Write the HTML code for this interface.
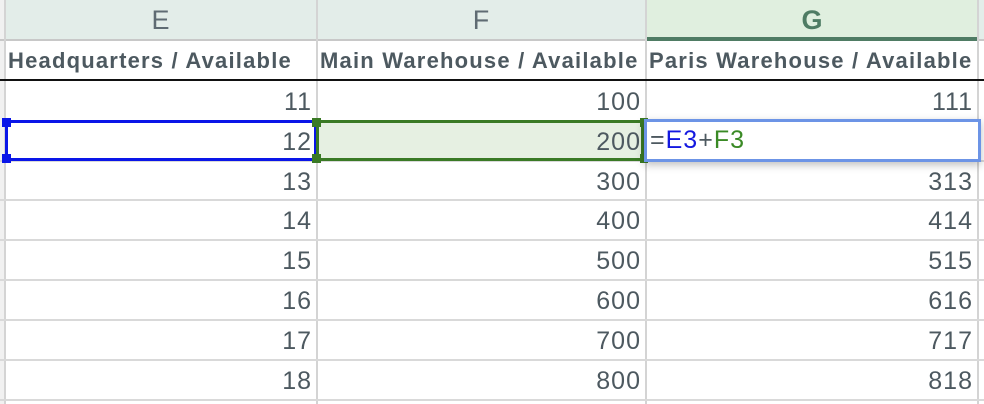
<!DOCTYPE html>
<html><head><meta charset="utf-8"><style>
body{margin:0;width:984px;height:404px;overflow:hidden;background:#fff;font-family:"Liberation Sans",Arial,sans-serif;position:relative}
div{position:absolute;box-sizing:border-box}
.hl{height:2px;background:#d9d9d9;left:0;width:984px}
.vl{width:2px;background:#d4d4d4;top:0;height:404px}
.n{font-size:25px;letter-spacing:1px;color:#4d5960;text-align:right;height:40px;line-height:42px}
.h{font-size:22px;letter-spacing:1.2px;font-weight:bold;color:#4d5960;top:40px;height:40px;line-height:42px;white-space:nowrap;overflow:hidden}
.c{font-size:27px;color:#5f6b73;top:0;height:40px;line-height:40px;text-align:center}
</style></head><body>
<div style="left:0;top:0;width:984px;height:40px;background:#e3ede9"></div>
<div style="left:0;top:0;width:5px;height:404px;background:#f1f1f1"></div>
<div style="left:646px;top:0;width:332px;height:40px;background:#e0efdf"></div>
<div style="left:0;top:39px;width:984px;height:2px;background:#c8c8c8"></div>
<div style="left:646px;top:37px;width:332px;height:4px;background:#4f7c64"></div>
<div class="c" style="left:5px;width:311px">E</div>
<div class="c" style="left:317px;width:328px">F</div>
<div class="c" style="left:646px;width:332px;color:#4f7c64;font-weight:bold">G</div>
<div class="vl" style="left:4px"></div>
<div class="vl" style="left:316px"></div>
<div class="vl" style="left:645px"></div>
<div class="vl" style="left:977px"></div>
<div class="h" style="left:8px;width:305px">Headquarters / Available</div>
<div class="h" style="left:320px;width:325px">Main Warehouse / Available</div>
<div class="h" style="left:649px;width:328px">Paris Warehouse / Available</div>
<div style="left:0;top:79px;width:984px;height:2px;background:#111"></div>
<div class="hl" style="top:160px"></div><div class="hl" style="top:199px"></div><div class="hl" style="top:239px"></div><div class="hl" style="top:279px"></div><div class="hl" style="top:319px"></div><div class="hl" style="top:359px"></div><div class="hl" style="top:399px"></div>
<div style="left:317px;top:121px;width:328px;height:39px;background:#e6f0e2"></div>
<div class="n" style="left:0;width:312px;top:81px">11</div><div class="n" style="left:0;width:641px;top:81px">100</div><div class="n" style="left:0;width:973px;top:81px">111</div>
<div class="n" style="left:0;width:312px;top:121px">12</div><div class="n" style="left:0;width:641px;top:121px">200</div>
<div class="n" style="left:0;width:312px;top:161px">13</div><div class="n" style="left:0;width:641px;top:161px">300</div><div class="n" style="left:0;width:973px;top:161px">313</div>
<div class="n" style="left:0;width:312px;top:200px">14</div><div class="n" style="left:0;width:641px;top:200px">400</div><div class="n" style="left:0;width:973px;top:200px">414</div>
<div class="n" style="left:0;width:312px;top:240px">15</div><div class="n" style="left:0;width:641px;top:240px">500</div><div class="n" style="left:0;width:973px;top:240px">515</div>
<div class="n" style="left:0;width:312px;top:280px">16</div><div class="n" style="left:0;width:641px;top:280px">600</div><div class="n" style="left:0;width:973px;top:280px">616</div>
<div class="n" style="left:0;width:312px;top:320px">17</div><div class="n" style="left:0;width:641px;top:320px">700</div><div class="n" style="left:0;width:973px;top:320px">717</div>
<div class="n" style="left:0;width:312px;top:360px">18</div><div class="n" style="left:0;width:641px;top:360px">800</div><div class="n" style="left:0;width:973px;top:360px">818</div>
<div style="left:5px;top:120px;width:312px;height:41px;border:3px solid #0a16e8"></div>
<div style="left:316px;top:120px;width:328px;height:41px;border:3px solid #3a7a25"></div>
<div style="left:2px;top:118px;width:9px;height:9px;background:#0a16e8"></div>
<div style="left:2px;top:154px;width:9px;height:9px;background:#0a16e8"></div>
<div style="left:312px;top:118px;width:9px;height:9px;background:#3a7a25"></div>
<div style="left:312px;top:154px;width:9px;height:9px;background:#3a7a25"></div>
<div style="left:640px;top:118px;width:8px;height:9px;background:#3a7a25"></div>
<div style="left:640px;top:154px;width:8px;height:9px;background:#3a7a25"></div>
<div style="left:644px;top:119px;width:337px;height:43px;border:3px solid #6c94e6;background:#fff;box-shadow:0 3px 8px rgba(0,0,0,.25);font-size:25px;letter-spacing:1px;line-height:36px;padding-left:3px;color:#4d5960">=<span style="color:#1419e0">E3</span>+<span style="color:#3a8a25">F3</span></div>
</body></html>
